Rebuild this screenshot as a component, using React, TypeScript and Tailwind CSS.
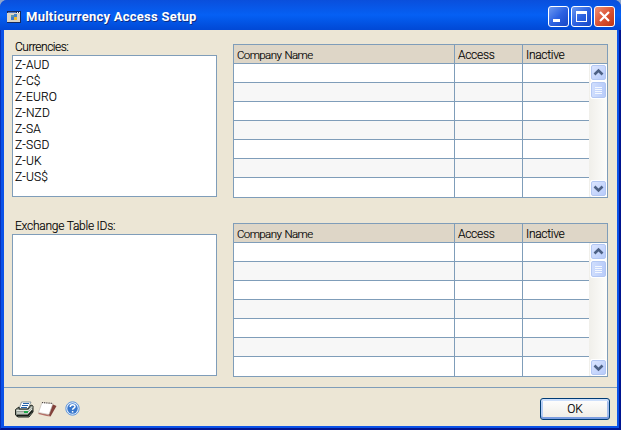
import React from "react";

const currencies = ["Z-AUD", "Z-C$", "Z-EURO", "Z-NZD", "Z-SA", "Z-SGD", "Z-UK", "Z-US$"];

function WindowIcon() {
  return (
    <svg className="ml-[7px] h-[12px] w-[14px] shrink-0" viewBox="0 0 14 12" shapeRendering="crispEdges">
      <path d="M0 0h14v12H0z" fill="#17295c" />
      <path d="M0 2h13v9H0z" fill="#d8d4c8" />
      <path d="M1 1h8v1H1z" fill="#5576b8" />
      <path d="M10 1h1v1h-1zM12 1h1v1h-1z" fill="#fff" />
      <path d="M4 4h3v2H4z" fill="#5d97a5" />
      <path d="M7 3h3v3H7z" fill="#4584c8" />
      <path d="M4 6h3v3H4z" fill="#3d7ccc" />
      <path d="M7 6h3v3H7z" fill="#edb92e" />
    </svg>
  );
}

function CaptionButton({ kind }: { kind: "min" | "max" | "close" }) {
  return (
    <div
      className={
        "h-[21px] w-[21px] rounded-[3px] border border-white " +
        (kind === "close"
          ? "bg-linear-to-br from-[#ec9076] via-[#dc5434] to-[#bd3511]"
          : "bg-linear-to-br from-[#6d98f0] via-[#2c62e2] to-[#1747c6]")
      }
    >
      <svg className="h-[19px] w-[19px]" viewBox="0 0 19 19">
        {kind === "min" && <path d="M4 12h7v3H4z" fill="#fff" />}
        {kind === "max" && <path d="M4 4h11v11H4zM5 7v7h9V7z" fill="#fff" fillRule="evenodd" />}
        {kind === "close" && <path d="M5 5l9 9M14 5l-9 9" stroke="#fff" strokeWidth="2.2" />}
      </svg>
    </div>
  );
}

function ScrollArrow({ down = false }: { down?: boolean }) {
  return (
    <div className="h-[17px] w-[17px] shrink-0 rounded-[2px] border border-white bg-white">
      <div className="h-[15px] w-[15px] rounded-[2px] border border-[#b3c7f3] bg-linear-to-br from-[#dbe5ff] to-[#b7cbfa]">
        <svg className="h-[13px] w-[13px]" viewBox="0 0 13 13">
          <path d={down ? "M2.5 4.5l4 4 4-4" : "M2.5 8.5l4-4 4 4"} fill="none" stroke="#4d6185" strokeWidth="2.6" />
        </svg>
      </div>
    </div>
  );
}

function ScrollBar() {
  return (
    <div className="flex w-[18px] shrink-0 flex-col bg-linear-to-r from-[#f0efea] to-[#fdfdfb] pl-px">
      <ScrollArrow />
      <div className="h-[18px] w-[17px] rounded-[2px] border border-white bg-white">
        <div className="flex h-[16px] w-[15px] flex-col items-center justify-center gap-px rounded-[2px] border border-[#b3c7f3] bg-linear-to-r from-[#d0defd] to-[#b9ccfa]">
          <div className="h-px w-[7px] bg-[#f4f8ff]" />
          <div className="h-px w-[7px] bg-[#f4f8ff]" />
          <div className="h-px w-[7px] bg-[#f4f8ff]" />
          <div className="h-px w-[7px] bg-[#f4f8ff]" />
        </div>
      </div>
      <div className="flex-1" />
      <ScrollArrow down />
    </div>
  );
}

function AccessGrid() {
  return (
    <div className="flex h-[154px] w-[375px] flex-col border border-[#7f9db9] bg-white">
      <div className="flex h-[19px] shrink-0 border-b border-[#7f9db9] bg-[#ded6c7] leading-[20px]">
        <div className="w-[221px] border-r border-[#7f9db9] pl-[3px] text-[11.5px] tracking-[-0.6px] [word-spacing:1px]">
          Company Name
        </div>
        <div className="w-[68px] border-r border-[#7f9db9] pl-[3px] tracking-[-0.3px]">Access</div>
        <div className="pl-[3px] tracking-[-0.3px]">Inactive</div>
      </div>
      <div className="flex min-h-0 flex-1">
        <div className="flex flex-1 flex-col">
          {[0, 1, 2, 3, 4, 5, 6].map((row) => (
            <div
              key={row}
              className={
                "flex " +
                (row < 6 ? "h-[19px] border-b border-[#7f9db9] " : "flex-1 ") +
                (row % 2 ? "bg-[#f7f7f7]" : "bg-white")
              }
            >
              <div className="w-[221px] border-r border-[#7f9db9]" />
              <div className="w-[68px] border-r border-[#7f9db9]" />
            </div>
          ))}
        </div>
        <ScrollBar />
      </div>
    </div>
  );
}

function PrinterIcon() {
  return (
    <svg className="h-[17px] w-[19px]" viewBox="0 0 19 17">
      <path d="M6.5 1H16l-3 7H4z" fill="#fff" stroke="#637680" strokeWidth=".7" />
      <path d="M8 2.5h6M7 4.5h6M6 6.5h6" stroke="#2464ac" strokeWidth="1" />
      <path d="M.5 8.5L4 6v2h9l3-4 2 1v6l-4 5H3l-2.5-2z" fill="#98a097" stroke="#20261f" strokeWidth="1" />
      <path d="M1.5 9.5h12l4-3.5M2 12h11l4-4" fill="none" stroke="#e6eae2" />
      <path d="M1.5 14.5H13l4.5-5" fill="none" stroke="#151a15" strokeWidth="1.6" />
      <path d="M9 10h4v2H9z" fill="#20a84a" />
    </svg>
  );
}

function NoteIcon() {
  return (
    <svg className="h-[16px] w-[19px]" viewBox="0 0 19 16">
      <path d="M14 3l4.5 2-6 10.5-3-2z" fill="#83423b" />
      <path d="M.5 11.5l9 2 3 2-4-.5-8-2z" fill="#b56f67" />
      <path d="M4 1.5l11 1-4 11-10.5-2z" fill="#fff" stroke="#bcb3ad" strokeWidth=".6" />
      <path d="M4 1.5l11 1" fill="none" stroke="#48403e" strokeWidth="1.2" strokeDasharray="1 1.2" />
    </svg>
  );
}

function HelpIcon() {
  return (
    <svg className="h-[15px] w-[15px]" viewBox="0 0 15 15">
      <circle cx="7.5" cy="7.5" r="6.7" fill="#e4eefb" stroke="#5d94da" />
      <circle cx="7.5" cy="7.5" r="5.2" fill="#3a78cc" />
      <path d="M5.2 6c0-3 4.8-3 4.8-.4 0 1.6-2.4 1.5-2.4 3.2M7.6 10v1.6" fill="none" stroke="#fff" strokeWidth="1.5" />
    </svg>
  );
}

export default function App() {
  return (
    <div className="h-[430px] w-[621px] overflow-hidden bg-[#90a6cb] font-['Roboto','Liberation_Sans',sans-serif] text-[12px] font-light text-black [-webkit-text-stroke:0.15px_black]">
      <div className="flex h-full flex-col overflow-hidden rounded-t-[7px] bg-[#0b49dc]">
        <header className="flex h-[30px] shrink-0 items-center bg-linear-to-b from-[#0a4fdc] via-[#0560f4] to-[#0148d5] pt-[3px]">
          <WindowIcon />
          <h1 className="ml-[5px] flex-1 text-[13px] font-bold tracking-[0.25px] text-white [-webkit-text-stroke:0] [text-shadow:1px_1px_#0b2d85]">
            Multicurrency Access Setup
          </h1>
          <div className="mr-[6px] flex gap-[2px]">
            <CaptionButton kind="min" />
            <CaptionButton kind="max" />
            <CaptionButton kind="close" />
          </div>
        </header>
        <div className="flex flex-1 border-l border-r-2 border-b-2 border-l-[#0831b9] border-r-[#001590] border-b-[#001590]">
          <div className="flex flex-1 flex-col border-l-[3px] border-r-2 border-b-2 border-[#0b52e8] bg-[#ece6d5]">
            <main className="flex h-[357px] pl-[8px]">
              <section className="w-[221px]">
                <div className="h-[25px] pl-[3px] pt-[9px] leading-[16px] tracking-[-0.5px]">Currencies:</div>
                <ul className="h-[142px] w-[205px] border border-[#7f9db9] bg-white pl-[2px] pt-[1px] leading-[16px] tracking-[0.15px]">
                  {currencies.map((code) => (
                    <li key={code}>{code}</li>
                  ))}
                </ul>
                <div className="h-[37px] pl-[3px] pt-[21px] leading-[16px] tracking-[-0.25px]">Exchange Table IDs:</div>
                <div className="h-[142px] w-[205px] border border-[#7f9db9] bg-white" />
              </section>
              <section className="flex flex-col gap-[25px] pt-[14px]">
                <AccessGrid />
                <AccessGrid />
              </section>
            </main>
            <footer className="flex flex-1 border-t border-[#7f9db9] pl-[11px] pr-[7px]">
              <div className="flex flex-1 gap-[4px] pt-[13px]">
                <PrinterIcon />
                <NoteIcon />
                <div className="pl-[4px]">
                  <HelpIcon />
                </div>
              </div>
              <button className="mt-[10px] h-[22px] w-[70px] rounded-[3px] border border-[#003c74] bg-linear-to-b from-white to-[#eeece5] shadow-[inset_0_2px_0_#cee0fb,inset_0_-2px_0_#7b9de0,inset_2px_0_0_#b4cdf5,inset_-2px_0_0_#a3bdec]">
                OK
              </button>
            </footer>
          </div>
        </div>
      </div>
    </div>
  );
}
